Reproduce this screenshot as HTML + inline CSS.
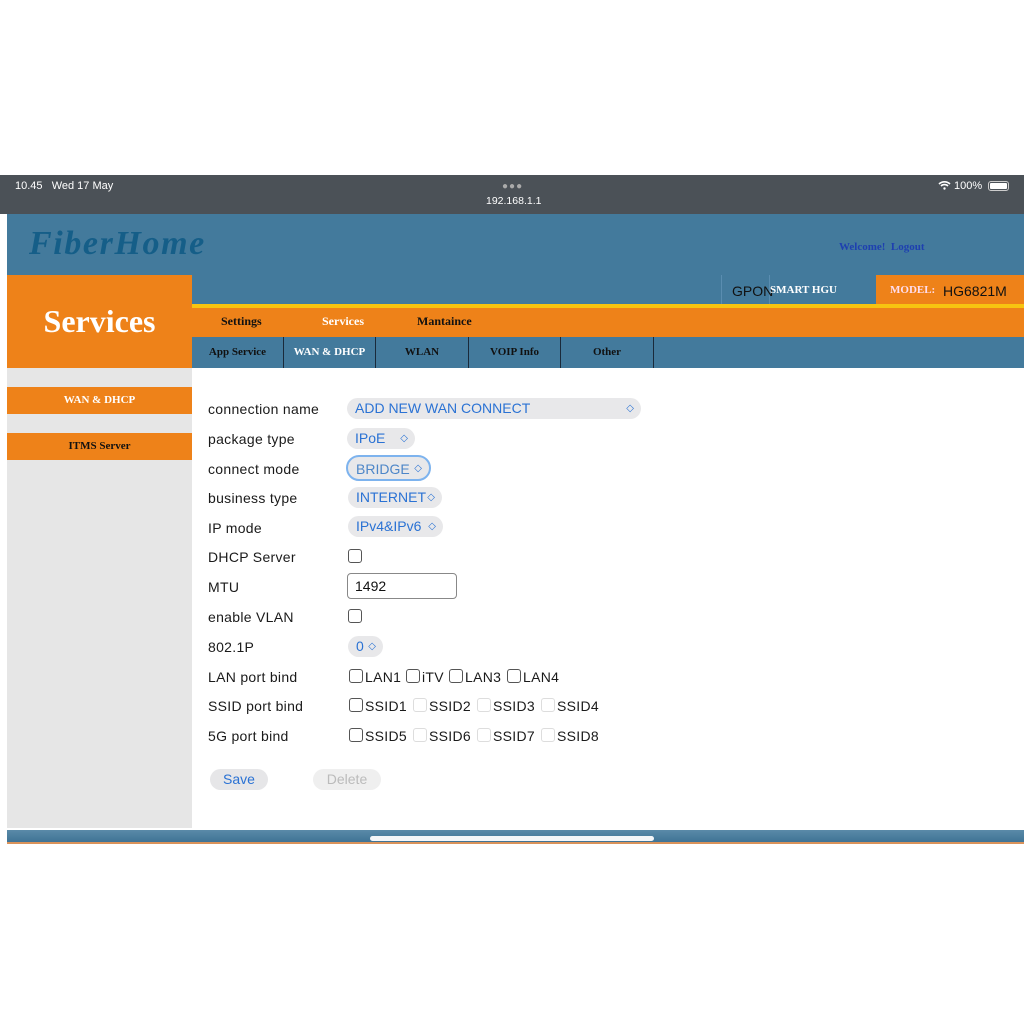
<!DOCTYPE html>
<html><head><meta charset="utf-8"><style>
*{margin:0;padding:0;box-sizing:border-box}
body{width:1024px;height:1024px;background:#fff;position:relative;overflow:hidden;font-family:"Liberation Sans",sans-serif}
.a{position:absolute}
.serif{font-family:"Liberation Serif",serif;font-weight:bold}
.lbl{position:absolute;left:208px;font-size:14px;color:#1a1a1a;line-height:16px;letter-spacing:0.3px}
.sel{position:absolute;background:#e8e8ea;border-radius:11px;color:#2a72d4;font-size:14px;line-height:21px;height:21px;padding-left:8px}
.sel .ar{position:absolute;right:7px;top:0;font-size:10px;color:#2a72d4}
.cb{position:absolute;width:14px;height:14px;border:1.3px solid #555;border-radius:3px;background:#fff}
.cb.l{border-color:#ddd}
.ck{position:absolute;font-size:14px;color:#1a1a1a;line-height:16px;letter-spacing:0.3px}
.sub{position:absolute;top:337px;height:31px;line-height:31px;text-align:center;font-size:11px;color:#111;border-right:1.5px solid #1a2a3a}
</style></head><body>
<div class="a" style="left:0;top:175px;width:1024px;height:39px;background:#4b5157"></div>
<div class="a" style="left:15px;top:180px;font-size:11px;color:#fff">10.45&nbsp;&nbsp;&nbsp;Wed 17 May</div>
<div class="a" style="left:502px;top:181px;font-size:10px;color:#aaa;letter-spacing:1px">●●●</div>
<div class="a" style="left:486px;top:195px;font-size:10.5px;color:#fff">192.168.1.1</div>
<div class="a" style="left:938px;top:180px;font-size:11px;color:#fff">
<svg width="13" height="10" viewBox="0 0 13 10" style="vertical-align:-1px"><path d="M1 4 A8 8 0 0 1 12 4" stroke="#fff" stroke-width="1.6" fill="none"/><path d="M3 6 A5 5 0 0 1 10 6" stroke="#fff" stroke-width="1.6" fill="none"/><circle cx="6.5" cy="8.5" r="1.2" fill="#fff"/></svg> 100%</div>
<div class="a" style="left:988px;top:181px;width:21px;height:10px;border:1px solid #ccc;border-radius:3px;padding:1px"><div style="width:100%;height:100%;background:#fff;border-radius:1px"></div></div>

<div class="a" style="left:7px;top:214px;width:1017px;height:154px;background:#437a9c"></div>
<div class="a serif" style="left:29px;top:225px;font-size:34px;font-style:italic;color:#155e88;letter-spacing:1.6px">FiberHome</div>
<div class="a serif" style="left:839px;top:241px;font-size:11px;color:#1e40b0">Welcome!&nbsp;&nbsp;Logout</div>
<div class="a" style="left:7px;top:275px;width:185px;height:93px;background:#ee8219"></div>
<div class="a serif" style="left:7px;top:303px;width:185px;text-align:center;font-size:32px;color:#fff">Services</div>
<div class="a" style="left:721px;top:275px;width:1px;height:30px;background:#5a8db0"></div>
<div class="a" style="left:769px;top:275px;width:1px;height:30px;background:#5a8db0"></div>
<div class="a" style="left:732px;top:283px;font-size:14px;color:#111">GPON</div>
<div class="a serif" style="left:770px;top:284px;font-size:11px;color:#fff">SMART HGU</div>
<div class="a" style="left:876px;top:275px;width:148px;height:30px;background:#ee8219"></div>
<div class="a serif" style="left:890px;top:284px;font-size:11px;color:#fde">MODEL:</div>
<div class="a" style="left:943px;top:283px;font-size:14px;color:#111">HG6821M</div>
<div class="a" style="left:192px;top:304px;width:832px;height:4px;background:#f7c410"></div>
<div class="a" style="left:192px;top:308px;width:832px;height:29px;background:#ee8219"></div>
<div class="a serif" style="left:221px;top:314px;font-size:12px;color:#111">Settings</div>
<div class="a serif" style="left:322px;top:314px;font-size:12px;color:#fff">Services</div>
<div class="a serif" style="left:417px;top:314px;font-size:12px;color:#111">Mantaince</div>
<div class="sub serif" style="left:192px;width:92px">App Service</div>
<div class="sub serif" style="left:284px;width:92px;color:#fff">WAN &amp; DHCP</div>
<div class="sub serif" style="left:376px;width:93px">WLAN</div>
<div class="sub serif" style="left:469px;width:92px">VOIP Info</div>
<div class="sub serif" style="left:561px;width:93px">Other</div>

<div class="a" style="left:7px;top:368px;width:185px;height:460px;background:#e6e6e6"></div>
<div class="a serif" style="left:7px;top:387px;width:185px;height:27px;line-height:27px;background:#ee8219;color:#fff;text-align:center;font-size:11px">WAN &amp; DHCP</div>
<div class="a serif" style="left:7px;top:433px;width:185px;height:27px;line-height:27px;background:#ee8219;color:#111;text-align:center;font-size:11px">ITMS Server</div>

<div class="lbl" style="top:401px">connection name</div>
<div class="lbl" style="top:431px">package type</div>
<div class="lbl" style="top:461px">connect mode</div>
<div class="lbl" style="top:490px">business type</div>
<div class="lbl" style="top:520px">IP mode</div>
<div class="lbl" style="top:549px">DHCP Server</div>
<div class="lbl" style="top:579px">MTU</div>
<div class="lbl" style="top:609px">enable VLAN</div>
<div class="lbl" style="top:639px">802.1P</div>
<div class="lbl" style="top:669px">LAN port bind</div>
<div class="lbl" style="top:698px">SSID port bind</div>
<div class="lbl" style="top:728px">5G port bind</div>

<div class="sel" style="left:347px;top:398px;width:294px">ADD NEW WAN CONNECT<span class="ar">◇</span></div>
<div class="sel" style="left:347px;top:428px;width:68px">IPoE<span class="ar">◇</span></div>
<div class="sel" style="left:346px;top:455px;width:85px;height:26px;line-height:24px;border:2px solid #7db3ee;border-radius:13px;color:#4d86c8;padding-left:8px">BRIDGE<span class="ar">◇</span></div>
<div class="sel" style="left:348px;top:487px;width:94px">INTERNET<span class="ar">◇</span></div>
<div class="sel" style="left:348px;top:516px;width:95px">IPv4&amp;IPv6<span class="ar">◇</span></div>
<div class="cb" style="left:348px;top:549px"></div>
<div class="a" style="left:347px;top:573px;width:110px;height:26px;border:1px solid #888;border-radius:4px;font-size:14px;line-height:24px;padding-left:7px;color:#111">1492</div>
<div class="cb" style="left:348px;top:609px"></div>
<div class="sel" style="left:348px;top:636px;width:35px">0<span class="ar">◇</span></div>

<div class="cb" style="left:349px;top:669px"></div><div class="ck" style="left:365px;top:669px">LAN1</div>
<div class="cb" style="left:406px;top:669px"></div><div class="ck" style="left:422px;top:669px">iTV</div>
<div class="cb" style="left:449px;top:669px"></div><div class="ck" style="left:465px;top:669px">LAN3</div>
<div class="cb" style="left:507px;top:669px"></div><div class="ck" style="left:523px;top:669px">LAN4</div>

<div class="cb" style="left:349px;top:698px"></div><div class="ck" style="left:365px;top:698px">SSID1</div>
<div class="cb l" style="left:413px;top:698px"></div><div class="ck" style="left:429px;top:698px">SSID2</div>
<div class="cb l" style="left:477px;top:698px"></div><div class="ck" style="left:493px;top:698px">SSID3</div>
<div class="cb l" style="left:541px;top:698px"></div><div class="ck" style="left:557px;top:698px">SSID4</div>

<div class="cb" style="left:349px;top:728px"></div><div class="ck" style="left:365px;top:728px">SSID5</div>
<div class="cb l" style="left:413px;top:728px"></div><div class="ck" style="left:429px;top:728px">SSID6</div>
<div class="cb l" style="left:477px;top:728px"></div><div class="ck" style="left:493px;top:728px">SSID7</div>
<div class="cb l" style="left:541px;top:728px"></div><div class="ck" style="left:557px;top:728px">SSID8</div>

<div class="a" style="left:210px;top:769px;width:58px;height:21px;border-radius:11px;background:#e6e6e8;color:#2a72d4;font-size:14px;line-height:21px;text-align:center">Save</div>
<div class="a" style="left:313px;top:769px;width:68px;height:21px;border-radius:11px;background:#efefef;color:#bbb;font-size:14px;line-height:21px;text-align:center">Delete</div>

<div class="a" style="left:7px;top:830px;width:1017px;height:12px;background:linear-gradient(#5a8aa8,#3f7395)"></div>
<div class="a" style="left:7px;top:842px;width:1017px;height:2px;background:#d9925a"></div>
<div class="a" style="left:370px;top:836px;width:284px;height:5px;border-radius:3px;background:#f4f6f8"></div>
</body></html>
